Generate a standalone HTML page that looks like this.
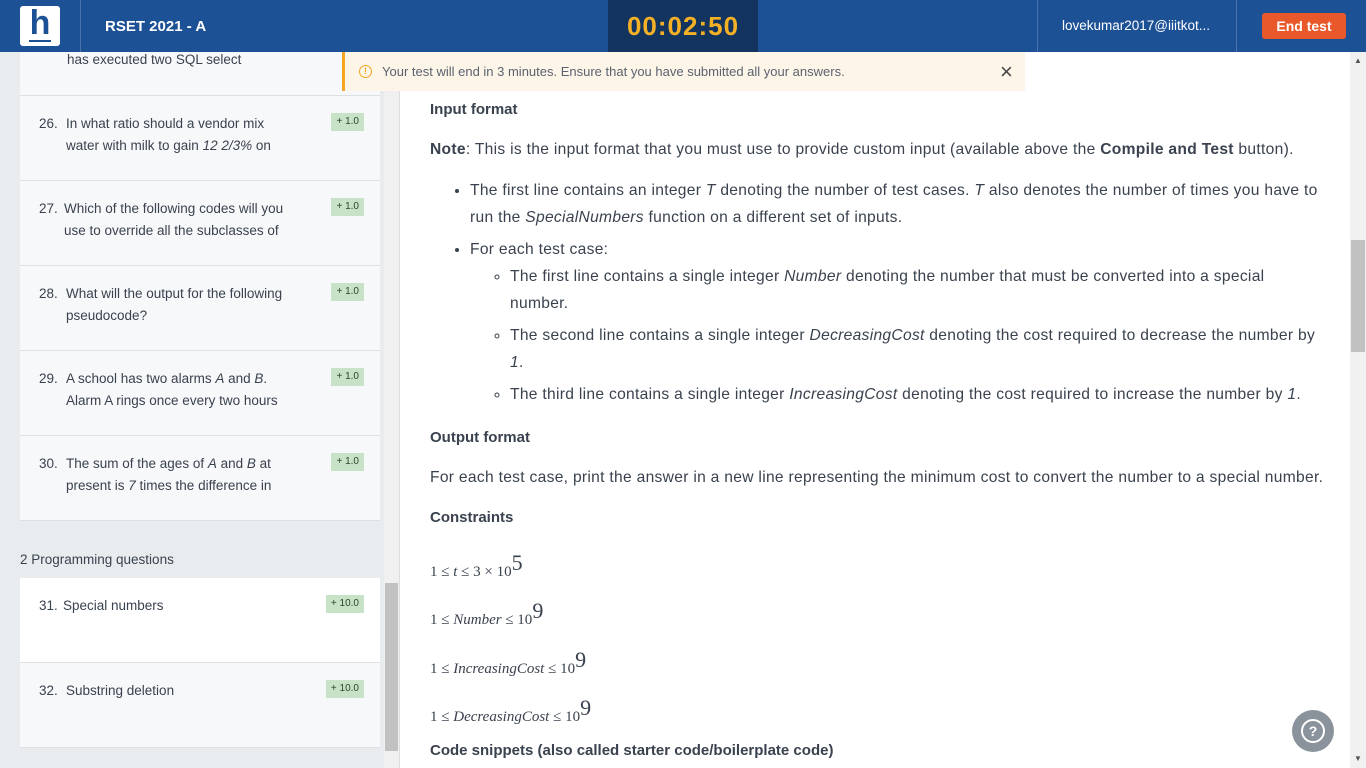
<!DOCTYPE html><html><head><meta charset="utf-8"><style>
*{margin:0;padding:0;box-sizing:border-box}
body{width:1366px;height:768px;overflow:hidden;font-family:"Liberation Sans",sans-serif;color:#39424e;background:#fff;position:relative}
.a{position:absolute}
.hdr{left:0;top:0;width:1366px;height:52px;background:#1d5196;color:#fff}
.side{left:0;top:52px;width:400px;height:716px;background:#e8ecee}
.card{position:absolute;left:20px;width:360px;background:#f7f8fa;border-bottom:1px solid #dde1e5;font-size:13.5px;line-height:22px}
.card .t{position:absolute;left:46px;top:17px;width:250px}
.card .n{position:absolute;left:-27px}
.badge{position:absolute;right:16px;top:17px;background:#c8e2c8;color:#26482a;font-size:10px;padding:0 5px;height:18px;line-height:18px}
.main{left:430px;font-size:15.6px;line-height:27px;letter-spacing:0.3px}
.main li{white-space:nowrap}
h4{font-size:15px;font-weight:bold;color:#39424e;letter-spacing:0}
.m{font-family:"Liberation Serif",serif;font-size:15px}
.m i{font-style:italic}
.m sup{font-size:22px;vertical-align:6px}
</style></head><body>
<div class="a hdr">
 <div class="a" style="left:20px;top:6px;width:40px;height:40px;background:#fff;border-radius:3px"></div>
 <div class="a" style="left:28px;top:4px;font-size:34px;font-weight:bold;color:#1d5196;width:24px;text-align:center">h</div>
 <div class="a" style="left:29px;top:40px;width:22px;height:2px;background:#1d5196"></div>
 <div class="a" style="left:80px;top:0;width:1px;height:52px;background:#4a72a8"></div>
 <div class="a" style="left:105px;top:18px;font-size:15px;font-weight:bold">RSET 2021 - A</div>
 <div class="a" style="left:608px;top:0;width:150px;height:52px;background:#12345f;color:#f5b126;font-size:26px;font-weight:bold;text-align:center;line-height:52px;letter-spacing:1px">00:02:50</div>
 <div class="a" style="left:1037px;top:0;width:1px;height:52px;background:#4a72a8"></div>
 <div class="a" style="left:1062px;top:18px;font-size:13.5px">lovekumar2017@iiitkot...</div>
 <div class="a" style="left:1236px;top:0;width:1px;height:52px;background:#4a72a8"></div>
 <div class="a" style="left:1262px;top:13px;width:84px;height:26px;background:#e8582a;border-radius:3px;text-align:center;line-height:26px;font-size:14px;font-weight:bold">End test</div>
</div>
<div class="a side">
 <div class="card" style="top:0;height:44px"><div class="t" style="left:47px;top:-3px">has executed two SQL select</div></div>
 <div class="card" style="top:44px;height:85px"><div class="t"><span class="n">26.</span>In what ratio should a vendor mix<br>water with milk to gain <i>12 2/3%</i> on</div><div class="badge">+ 1.0</div></div>
 <div class="card" style="top:129px;height:85px"><div class="t" style="left:44px"><span class="n" style="left:-25px">27.</span>Which of the following codes will you<br>use to override all the subclasses of</div><div class="badge">+ 1.0</div></div>
 <div class="card" style="top:214px;height:85px"><div class="t"><span class="n">28.</span>What will the output for the following<br>pseudocode?</div><div class="badge">+ 1.0</div></div>
 <div class="card" style="top:299px;height:85px"><div class="t"><span class="n">29.</span>A school has two alarms <i>A</i> and <i>B</i>.<br>Alarm A rings once every two hours</div><div class="badge">+ 1.0</div></div>
 <div class="card" style="top:384px;height:85px"><div class="t"><span class="n">30.</span>The sum of the ages of <i>A</i> and <i>B</i> at<br>present is <i>7</i> times the difference in</div><div class="badge">+ 1.0</div></div>
 <div class="a" style="left:20px;top:500px;font-size:13.5px">2 Programming questions</div>
 <div class="card" style="top:526px;height:85px;background:#fff"><div class="t" style="left:43px"><span class="n" style="left:-24px">31.</span>Special numbers</div><div class="badge">+ 10.0</div></div>
 <div class="card" style="top:611px;height:85px"><div class="t"><span class="n">32.</span>Substring deletion</div><div class="badge">+ 10.0</div></div>
 <div class="a" style="left:384px;top:0;width:15px;height:716px;background:#f0f0f0"></div>
 <div class="a" style="left:385px;top:531px;width:13px;height:168px;background:#c1c1c1"></div>
 <div class="a" style="left:399px;top:0;width:1px;height:716px;background:#ddd"></div>
</div>
<div class="a" style="left:342px;top:52px;width:683px;height:39px;background:#fdf6e8;border-left:3px solid #f5a623;font-size:13px;color:#5a6270;line-height:39px">
 <span class="a" style="left:14px;top:13px;width:13px;height:13px;border:1.5px solid #f5a623;border-radius:50%;color:#f5a623;font-size:9px;font-weight:bold;line-height:10px;text-align:center">!</span>
 <span class="a" style="left:37px">Your test will end in 3 minutes. Ensure that you have submitted all your answers.</span>
 <span class="a" style="left:655px;font-size:22px;color:#444">×</span>
</div>
<div class="a main" style="top:96px;width:892px">
 <h4>Input format</h4>
 <p style="margin-top:13px"><b>Note</b>: This is the input format that you must use to provide custom input (available above the <b>Compile and Test</b> button).</p>
 <ul style="margin-top:14px;padding-left:40px">
  <li>The first line contains an integer <i>T</i> denoting the number of test cases. <i>T</i> also denotes the number of times you have to<br>run the <i>SpecialNumbers</i> function on a different set of inputs.</li>
  <li style="margin-top:5px">For each test case:
   <ul style="list-style:circle;padding-left:40px">
    <li>The first line contains a single integer <i>Number</i> denoting the number that must be converted into a special<br>number.</li>
    <li style="margin-top:5px">The second line contains a single integer <i>DecreasingCost</i> denoting the cost required to decrease the number by<br><i>1</i>.</li>
    <li style="margin-top:5px">The third line contains a single integer <i>IncreasingCost</i> denoting the cost required to increase the number by <i>1</i>.</li>
   </ul></li>
 </ul>
</div>
<div class="a main" style="top:424px"><h4>Output format</h4></div>
<div class="a main" style="top:464px;white-space:nowrap">For each test case, print the answer in a new line representing the minimum cost to convert the number to a special number.</div>
<div class="a main" style="top:504px"><h4>Constraints</h4></div>
<div class="a m" style="left:430px;top:550px">1 ≤ <i>t</i> ≤ 3 × 10<sup>5</sup></div>
<div class="a m" style="left:430px;top:598px">1 ≤ <i>Number</i> ≤ 10<sup>9</sup></div>
<div class="a m" style="left:430px;top:647px">1 ≤ <i>IncreasingCost</i> ≤ 10<sup>9</sup></div>
<div class="a m" style="left:430px;top:695px">1 ≤ <i>DecreasingCost</i> ≤ 10<sup>9</sup></div>
<div class="a main" style="top:737px"><h4>Code snippets (also called starter code/boilerplate code)</h4></div>
<div class="a" style="left:1292px;top:710px;width:42px;height:42px;border-radius:50%;background:#8a939c"></div>
<div class="a" style="left:1301px;top:719px;width:24px;height:24px;border-radius:50%;border:2px solid #fff;color:#fff;font-size:14px;font-weight:bold;text-align:center;line-height:20px">?</div>
<div class="a" style="left:1350px;top:52px;width:16px;height:716px;background:#f1f1f1"></div>
<div class="a" style="left:1351px;top:240px;width:14px;height:112px;background:#c1c1c1"></div>
<div class="a" style="left:1354px;top:56px;font-size:8px;color:#555">▲</div>
<div class="a" style="left:1354px;top:754px;font-size:8px;color:#555">▼</div>
</body></html>
